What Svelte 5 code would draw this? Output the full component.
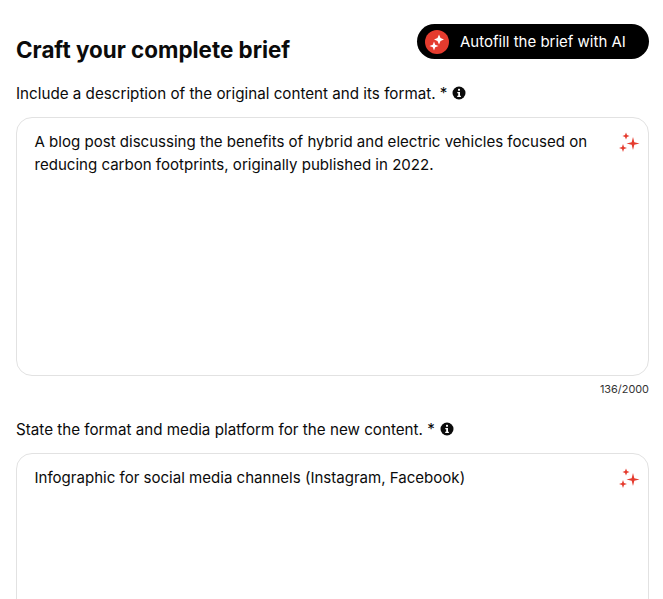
<script>
	const fields = [
		{
			label: 'Include a description of the original content and its format. *',
			value: 'A blog post discussing the benefits of hybrid and electric vehicles focused on reducing carbon footprints, originally published in 2022.',
			counter: '136/2000'
		},
		{
			label: 'State the format and media platform for the new content. *',
			value: 'Infographic for social media channels (Instagram, Facebook)'
		}
	];
</script>

{#snippet sparkles(color)}
	<svg viewBox="0 0 24 24" width="24" height="24" aria-hidden="true">
		<g fill={color}>
			<path d="M15 5 16.300 10.200 21.500 11.500 16.300 12.800 15 18 13.700 12.800 8.500 11.500 13.700 10.200Z" />
			<path d="M8 0.500 9 3 11.500 4 9 5 8 7.500 7 5 4.500 4 7 3Z" />
			<path d="M5 12 6 15 9 16 6 17 5 20 4 17 1 16 4 15Z" />
		</g>
	</svg>
{/snippet}

<main class="brief">
	<header>
		<h1>Craft your complete brief</h1>
		<button type="button" class="autofill">
			<span class="badge">
				<svg viewBox="0 0 24 24" width="24" height="24" aria-hidden="true">
					<g fill="#fff">
						<path d="M14 4.500 15.500 8 19 9.500 15.500 11 14 14.500 12.500 11 9 9.500 12.500 8Z" />
						<path d="M9 11.500 10.200 14.800 13.500 16 10.200 17.200 9 20.500 7.800 17.200 4.500 16 7.800 14.800Z" />
					</g>
				</svg>
			</span>
			Autofill the brief with AI
		</button>
	</header>

	{#each fields as field}
		<section class="field">
			<div class="label">
				<span>{field.label}</span>
				<svg class="info" viewBox="0 0 14 14" width="14" height="14" aria-hidden="true">
					<circle cx="7" cy="7" r="6.500" fill="#0b0b0b" />
					<rect x="6" y="2.800" width="2" height="2" rx="0.6" fill="#fff" />
					<path d="M5.300 6h2.700v3.800h.9v1.200H5.200V9.800h1V7.200h-.9Z" fill="#fff" />
				</svg>
			</div>
			<div class="box">
				<p>{field.value}</p>
				<span class="spark">{@render sparkles('#e53b2e')}</span>
			</div>
			{#if field.counter}
				<div class="counter">{field.counter}</div>
			{/if}
		</section>
	{/each}
</main>

<style>
	:global(body) {
		background: #fff;
		overflow: hidden;
	}

	.brief {
		height: 599px;
		overflow: hidden;
		padding: 24px 14px 0 16px;
		box-sizing: border-box;
		color: #0b0b0b;
		font-family: 'Inter', 'Liberation Sans', sans-serif;
	}

	header {
		display: flex;
		justify-content: space-between;
		align-items: flex-start;
		height: 35px;
	}

	h1 {
		margin: 11px 0 0;
		font-size: 22.4px;
		line-height: 30px;
		font-weight: 700;
	}

	.autofill {
		display: flex;
		align-items: center;
		gap: 10px;
		width: 232px;
		height: 35px;
		padding: 0 0 0 8px;
		border: 0;
		border-radius: 18px;
		background: #000;
		color: #fff;
		font: 400 15px 'Inter', 'Liberation Sans', sans-serif;
	}

	.badge {
		display: flex;
		align-items: center;
		justify-content: center;
		width: 24px;
		height: 24px;
		margin-right: 1px;
		border-radius: 50%;
		background: #e53b2e;
	}

	.field {
		margin-top: 23px;
	}

	.field + .field {
		margin-top: 22px;
	}

	.label {
		display: flex;
		align-items: center;
		gap: 5px;
		height: 22px;
		font-size: 15.2px;
	}

	.info {
		margin-top: -1px;
	}

	.box {
		position: relative;
		box-sizing: border-box;
		height: 259px;
		margin-top: 13px;
		padding: 12px 52px 0 17.500px;
		border: 1px solid #e2e2e2;
		border-radius: 16px;
	}

	.field + .field .box {
		margin-top: 13px;
	}

	.box p {
		margin: 0;
		font-size: 15.05px;
		line-height: 23px;
	}

	.spark {
		position: absolute;
		top: 14px;
		right: 6px;
	}

	.counter {
		margin-top: 6px;
		font-size: 10.9px;
		line-height: 14px;
		text-align: right;
		color: #333;
	}
</style>
